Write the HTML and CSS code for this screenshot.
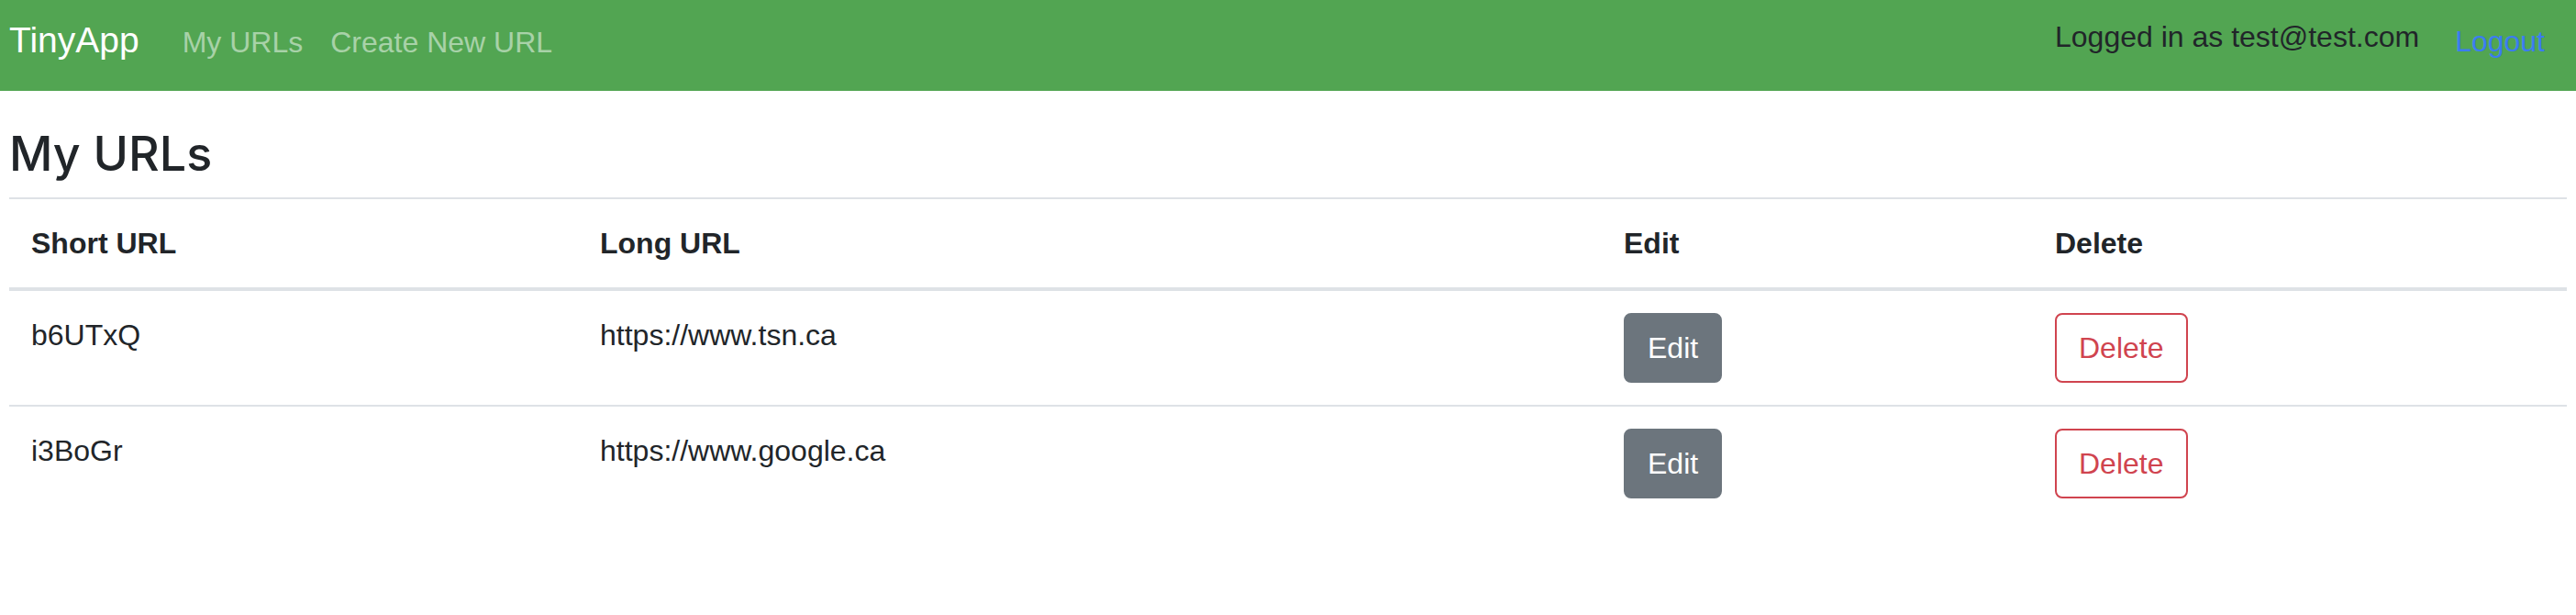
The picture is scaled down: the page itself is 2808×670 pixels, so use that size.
FILE: index.html
```html
<!DOCTYPE html>
<html lang="en">
<head>
<meta charset="utf-8">
<title>TinyApp</title>
<link rel="stylesheet" href="styles.css">
</head>
<body>
<nav class="navbar">
  <a class="brand" href="#">TinyApp</a>
  <div class="nav-left">
    <a class="nav-link" href="#">My URLs</a>
    <a class="nav-link" href="#">Create New URL</a>
  </div>
  <div class="nav-right">
    <span class="user">Logged in as test@test.com</span>
    <a class="logout" href="#">Logout</a>
  </div>
</nav>
<main class="page">
  <h1 class="title">My URLs</h1>
  <table class="urls">
    <colgroup>
      <col class="col-short">
      <col class="col-long">
      <col class="col-edit">
      <col class="col-delete">
    </colgroup>
    <thead>
      <tr>
        <th>Short URL</th>
        <th>Long URL</th>
        <th>Edit</th>
        <th>Delete</th>
      </tr>
    </thead>
    <tbody>
      <tr>
        <td>b6UTxQ</td>
        <td>https://www.tsn.ca</td>
        <td><button class="btn btn-edit">Edit</button></td>
        <td><button class="btn btn-delete">Delete</button></td>
      </tr>
      <tr>
        <td>i3BoGr</td>
        <td>https://www.google.ca</td>
        <td><button class="btn btn-edit">Edit</button></td>
        <td><button class="btn btn-delete">Delete</button></td>
      </tr>
    </tbody>
  </table>
</main>
</body>
</html>
```
FILE: styles.css
```css
* { box-sizing: border-box; }

html, body {
  margin: 0;
  padding: 0;
  background: #ffffff;
  color: #212529;
  font-family: "Liberation Sans", Arial, sans-serif;
  font-size: 32px;
  line-height: 48px;
}

.navbar {
  display: flex;
  align-items: flex-start;
  height: 99px;
  padding: 20px 34px 0 10px;
  background: #52a552;
}

.brand {
  font-size: 39px;
  line-height: 48px;
  color: #ffffff;
  text-decoration: none;
}

.nav-left {
  display: flex;
  gap: 30px;
  margin-left: 47px;
  margin-top: 2px;
}

.nav-link {
  color: rgba(255, 255, 255, 0.5);
  text-decoration: none;
}

.nav-right {
  display: flex;
  align-items: flex-start;
  gap: 39px;
  margin-left: auto;
}

.user {
  margin-top: -4px;
  color: #212529;
}

.logout {
  margin-top: 1px;
  color: #3b7cf2;
  text-decoration: none;
}

.page {
  padding: 0 10px;
}

.title {
  margin: 38px 0 16px 0;
  font-family: "Inter", "Liberation Sans", sans-serif;
  font-weight: 500;
  font-size: 52px;
  line-height: 62.4px;
}

.urls {
  width: 100%;
  border-collapse: collapse;
  table-layout: fixed;
}

.col-short { width: 620px; }
.col-long { width: 1116px; }
.col-edit { width: 470px; }
.col-delete { width: 582px; }

.urls th,
.urls td {
  padding: 24px;
  text-align: left;
  border-top: 2px solid #dee2e6;
}

.urls th {
  font-weight: bold;
  vertical-align: bottom;
}

.urls thead th {
  border-bottom: 4px solid #dee2e6;
}

.urls td {
  vertical-align: top;
}

.btn {
  display: inline-block;
  margin: 0;
  padding: 12px 24px;
  font-family: "Liberation Sans", Arial, sans-serif;
  font-size: 32px;
  line-height: 48px;
  border: 2px solid transparent;
  border-radius: 8px;
  cursor: pointer;
}

.btn-edit {
  background: #6c757d;
  border-color: #6c757d;
  color: #ffffff;
}

.btn-delete {
  background: transparent;
  border-color: #d0444f;
  color: #d0444f;
}
```
